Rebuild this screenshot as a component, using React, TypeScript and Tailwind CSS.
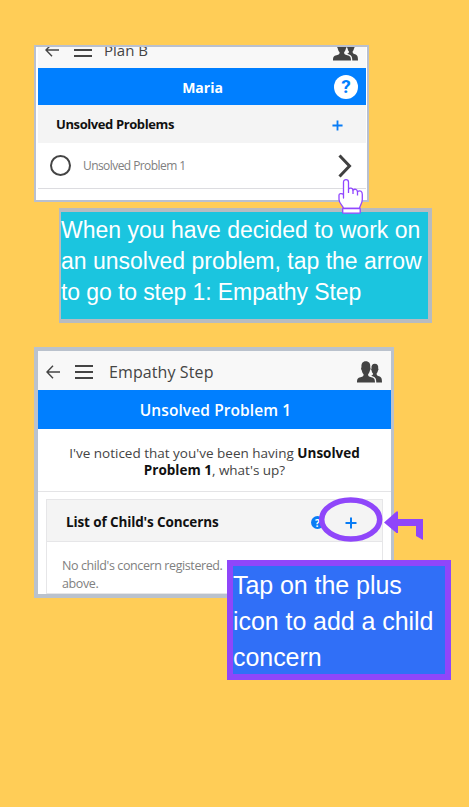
import type { ReactNode } from "react";

const ui = "font-['Open_Sans','Noto_Sans',sans-serif]";

function BackArrow() {
  return (
    <svg className="block h-[14px] w-[15px]" viewBox="0 0 15 14" fill="none" stroke="#444" strokeWidth="1.4">
      <path d="M14 7H1.2M7 .8L1 7l6 6.2" />
    </svg>
  );
}

function MenuLines() {
  return (
    <svg className="block h-[14px] w-[18px]" viewBox="0 0 18 14" fill="none" stroke="#444" strokeWidth="1.9">
      <path d="M0 1h18M0 7h18M0 13h18" />
    </svg>
  );
}

function People() {
  return (
    <svg className="block h-[22px] w-[25px]" viewBox="0 0 25 22" fill="#434343">
      <path d="M0 21.500C0 17.600 .8 17 3.500 16.200C6 15.500 6.600 15 6.600 13.200C5.200 11.800 5.100 10.300 4.700 9.200C3.900 8.300 3.900 7 4.500 6.300C4.100 2.500 5.700.3 8.800.3C12 .3 13.700 2.500 13.200 6.300C13.800 7 13.700 8.400 13 9.200C12.600 10.500 12.400 11.800 11.100 13.200C11.100 15 11.800 15.500 14.200 16.200C17 17 18 17.600 18 21.500Z" />
      <path d="M14.200 14.700C15.600 14.200 16 13.800 16 12.500C14.800 11.300 14.900 10.400 14.600 9.500C14 8.800 14 8 14.500 7.500C14.200 4.600 15.300 2.800 17.800 2.800C20.300 2.800 21.600 4.500 21.200 7.500C21.700 8 21.600 9 21 9.600C20.700 10.700 20.600 11.500 19.600 12.500C19.600 14 20 14.500 22 15.200C24.300 16 25 17 25 21.500H19.300C19.300 17.200 18.300 16 14.200 14.700Z" />
    </svg>
  );
}

function Plus({ className }: { className: string }) {
  return (
    <svg className={className} viewBox="0 0 12 12" fill="none" stroke="#087cf5" strokeWidth="2">
      <path d="M6 .5v11M.5 6h11" />
    </svg>
  );
}

function TopBar({ title, className, titleClass }: { title: ReactNode; className: string; titleClass: string }) {
  return (
    <div className={`flex shrink-0 items-center bg-[#f8f8f8] ${className}`}>
      <BackArrow />
      <div className="ml-[14px]">
        <MenuLines />
      </div>
      <span className={`flex-1 whitespace-nowrap text-[#444] ${titleClass}`}>{title}</span>
      <People />
    </div>
  );
}

function Hand() {
  return (
    <svg className="absolute left-[338px] top-[179px] h-[35px] w-[26px]" viewBox="0 0 26 35" fill="#fff" stroke="#9146ff" strokeWidth="1.3" strokeLinejoin="round">
      <path d="M5.500 19V3.200C5.500-.2 10.500-.2 10.500 3.200V10C12 8.500 14.500 9 15 11C17 9.500 19 10.500 19.500 12.500C22.500 11 24.300 12.500 24.300 15.500V20.500C24.300 24 22 26.500 21.500 29.500H5.500C5 26.500 1 24.500 1 20.500V16C1 14.500 3.500 14 5.500 15.500Z" />
      <path d="M10.500 10v4M15 11v4M19.500 12.500v4" fill="none" />
      <rect x="4.700" y="29.500" width="17.500" height="4.700" rx=".8" />
    </svg>
  );
}

export default function App() {
  return (
    <main className="relative h-[807px] w-[469px] overflow-hidden bg-[#ffcd57] pt-[45px]">
      <section className={`ml-[34px] flex h-[157px] w-[335px] flex-col overflow-hidden border-2 border-[#b9c0cf] bg-white pl-[2px] pr-px ${ui}`}>
        <div className="h-[21px] shrink-0 overflow-hidden bg-[#f8f8f8]">
          <TopBar
            title="Plan B"
            className="-mt-[9px] h-[24px] pl-[7px] pr-[8px]"
            titleClass="ml-[12px] text-[15px] leading-[20px]"
          />
        </div>
        <div className="flex h-[37px] shrink-0 items-center bg-[#007fff] text-white">
          <span className="flex-1 pl-[33px] pt-px text-center text-[14px] font-bold">Maria</span>
          <span className="mr-[8px] flex size-[24px] items-center justify-center rounded-full bg-white font-[Roboto,sans-serif] text-[19px] font-bold leading-none text-[#007fff]">?</span>
        </div>
        <div className="flex h-[38px] shrink-0 items-center bg-[#f4f4f4] pl-[18px] pr-[23px]">
          <span className="flex-1 whitespace-nowrap pt-px text-[13px] font-bold tracking-[-0.4px] text-[#111]">Unsolved Problems</span>
          <Plus className="mt-[2px] h-[11px] w-[11px]" />
        </div>
        <div className="flex h-[46px] shrink-0 items-center border-b border-[#dcdce0] pl-[12px] pr-[14px]">
          <span className="size-[21px] rounded-full border-2 border-[#444]" />
          <span className="ml-[12px] flex-1 whitespace-nowrap text-[12px] tracking-[-0.57px] text-[#808080]">Unsolved Problem 1</span>
          <svg className="h-[24px] w-[14px]" viewBox="0 0 14 24" fill="none" stroke="#404040" strokeWidth="3">
            <path d="M1.500 1.500L11.500 12L1.500 22.500" />
          </svg>
        </div>
      </section>

      <section className="ml-[59px] mt-[6px] h-[115px] w-[373px] whitespace-nowrap border-4 border-l-2 border-[#b8bbc0] bg-[#1bc5df] pt-[3px] font-['Liberation_Sans',Arial,sans-serif] text-[23px] leading-[31px] text-white">
        When you have decided to work on
        <br />
        an unsolved problem, tap the arrow
        <br />
        <span className="tracking-[-0.1px]">to go to step 1: Empathy Step</span>
      </section>

      <section className={`ml-[34px] mt-[24px] flex h-[251px] w-[360px] flex-col overflow-hidden border-4 border-r-[3px] border-[#bac2cd] bg-white ${ui}`}>
        <TopBar title="Empathy Step" className="h-[39px] pl-[8px] pr-[9px] pt-[2px]" titleClass="ml-[16px] text-[16px] tracking-[0.1px]" />
        <div className="flex h-[39px] shrink-0 items-center justify-center bg-[#007fff] pl-[2px] pt-[3px] text-[15.500px] font-semibold tracking-[0.1px] text-white">
          Unsolved Problem 1
        </div>
        <div className="h-[63px] shrink-0 whitespace-nowrap border-b border-[#e4e4e6] pt-[16px] text-center text-[13.500px] leading-[17px] text-[#444]">
          I've noticed that you've been having <b className="text-[#111]">Unsolved</b>
          <br />
          <b className="text-[#111]">Problem 1</b>, what's up?
        </div>
        <div className="ml-[8px] mr-[8px] mt-[7px] flex-1 border border-[#e6e6e8]">
          <div className="flex h-[42px] items-center border-b border-[#e6e6e8] bg-[#f4f4f4] pl-[19px]">
            <span className="w-[245px] whitespace-nowrap pt-[3px] text-[13.500px] font-bold tracking-[-0.12px] text-[#111]">List of Child's Concerns</span>
            <span className="mt-[4px] flex size-[13px] items-center justify-center rounded-full bg-[#087cf5] text-[10px] font-bold leading-none text-white">?</span>
            <Plus className="ml-[21px] mt-[5px] h-[12px] w-[12px]" />
          </div>
          <p className="whitespace-nowrap pl-[15px] pt-[15px] text-[12.500px] leading-[18px] tracking-[-0.4px] text-[#808080]">
            No child's concern registered.
            <br />
            above.
          </p>
        </div>
      </section>

      <Hand />
      <svg className="absolute left-[316px] top-[495px] h-[50px] w-[110px]" viewBox="316 495 110 50">
        <ellipse cx="350.700" cy="519.500" rx="29" ry="19.500" fill="none" stroke="#8f46fa" strokeWidth="5.500" />
        <path d="M384 522.500L396.500 511.500H398V519H423V540L416 536V526H398V533H396.500Z" fill="#8f46fa" />
      </svg>
      <section className="absolute left-[227px] top-[560px] h-[120px] w-[224px] whitespace-nowrap border-6 border-[#8f46fa] bg-[#306ff7] pt-px font-['Liberation_Sans',Arial,sans-serif] text-[25px] leading-[36px] tracking-[-0.06px] text-white">
        Tap on the plus
        <br />
        icon to add a child
        <br />
        concern
      </section>
    </main>
  );
}
